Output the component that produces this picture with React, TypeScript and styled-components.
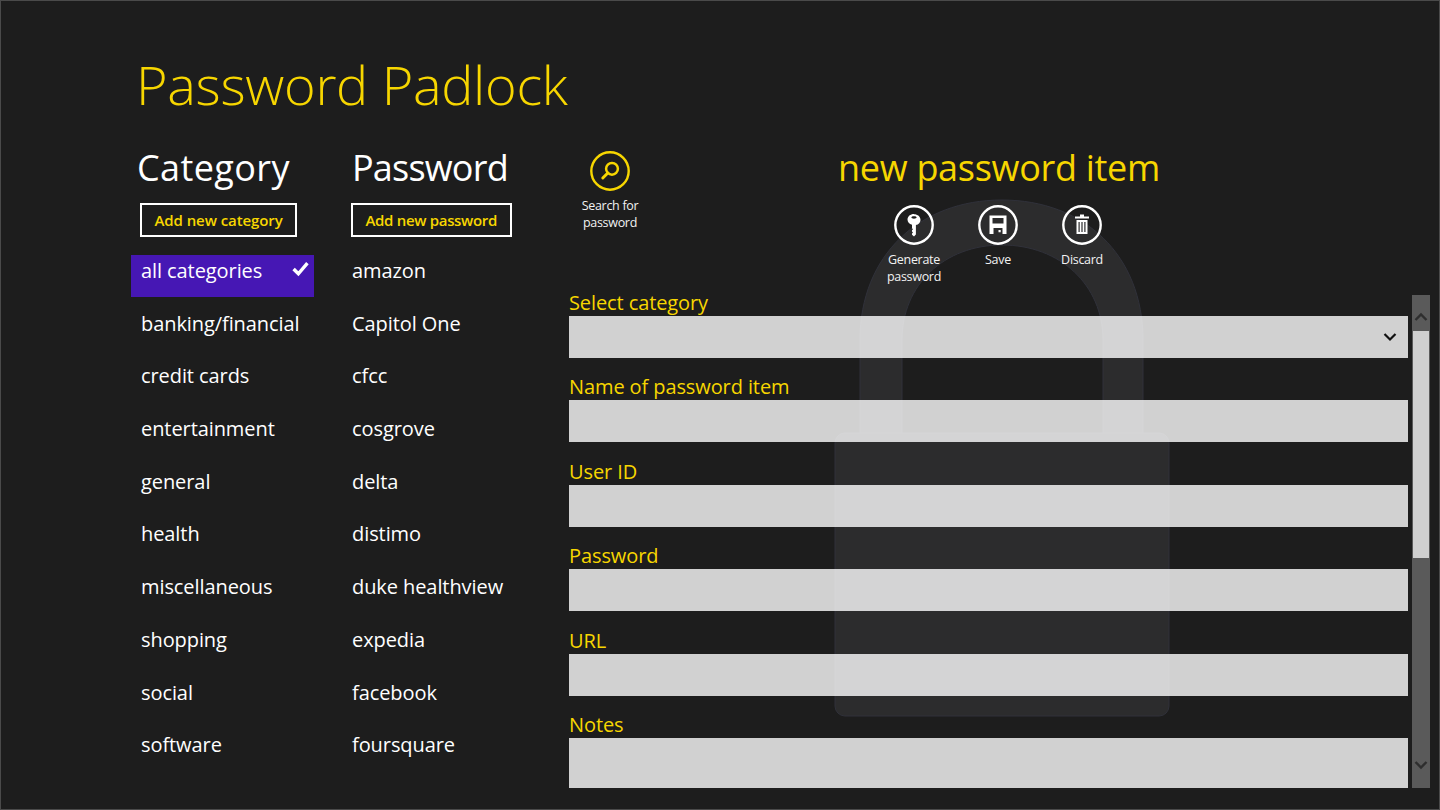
import * as React from 'react';
import styled, { createGlobalStyle } from 'styled-components';

const categories = ['all categories', 'banking/financial', 'credit cards', 'entertainment', 'general', 'health', 'miscellaneous', 'shopping', 'social', 'software'];
const passwords = ['amazon', 'Capitol One', 'cfcc', 'cosgrove', 'delta', 'distimo', 'duke healthview', 'expedia', 'facebook', 'foursquare'];
const fields = ['Select category', 'Name of password item', 'User ID', 'Password', 'URL'];

const yellow = '#f7d600';

const App = (): JSX.Element => <Page>
    <GlobalStyle />
    <Title>Password Padlock</Title>
    <Columns>
        <CategoryColumn>
            <ColumnHeading tracking={0.4}>Category</ColumnHeading>
            <AddButton inset={3} tracking={-0.08}>Add new category</AddButton>
            <List>
                {categories.map((name, index) => <Item key={name} selected={index === 0} inset={4}>
                    {name}
                    {index === 0 && <CheckMark viewBox="0 0 16 16"><path d="M1.5 8.5l4.5 4.5L14.5 3" /></CheckMark>}
                </Item>)}
            </List>
        </CategoryColumn>
        <PasswordColumn>
            <ColumnHeading tracking={-0.8}>Password</ColumnHeading>
            <AddButton inset={-1} tracking={-0.32}>Add new password</AddButton>
            <List>
                {passwords.map(name => <Item key={name} inset={0}>{name}</Item>)}
            </List>
        </PasswordColumn>
        <Detail>
            <Watermark viewBox="-1 -1 336 518">
                <path d="M25 233 L25 140 C25 55 85 0 167 0 C249 0 308 55 308 140 L308 233 L268 233 L268 140 C268 85 225 45 167 45 C109 45 67 85 67 140 L67 233 Z" />
                <rect x="0" y="233" width="334" height="283" rx="10" />
            </Watermark>
            <DetailTop>
                <SearchAction>
                    <RoundIcon viewBox="0 0 40 40" accent>
                        <circle cx="20" cy="20" r="18.7" />
                        <circle cx="22" cy="17.800" r="5.900" strokeWidth="2.500" />
                        <path d="M17.800 22L12.800 27" strokeWidth="3" strokeLinecap="round" />
                    </RoundIcon>
                    <ActionLabel>Search for<br />password</ActionLabel>
                </SearchAction>
                <DetailHead>
                    <DetailHeading>new password item</DetailHeading>
                    <Actions>
                        <Action>
                            <RoundIcon viewBox="0 0 40 40">
                                <circle cx="20" cy="20" r="18.7" />
                                <FillGroup>
                                    <path fillRule="evenodd" d="M20 9.300c3.700 0 6.500 2.400 6.500 5.600 0 2.400-1.900 4.400-4.600 5.200v9.400l-1.900 2-2-1.700v-1.400l1-1-1-1v-1.200l1-1-1-1v-3.500c-2.800-.8-4.500-2.800-4.500-5.200 0-3.200 2.800-5.600 6.500-5.600zm0 2c-1.500 0-2.600.5-2.600 1.200s1.100 1.200 2.600 1.200 2.600-.5 2.600-1.200-1.100-1.200-2.600-1.200z" />
                                </FillGroup>
                            </RoundIcon>
                            <ActionLabel>Generate<br />password</ActionLabel>
                        </Action>
                        <Action>
                            <RoundIcon viewBox="0 0 40 40">
                                <circle cx="20" cy="20" r="18.7" />
                                <FillGroup>
                                    <path fillRule="evenodd" d="M11.500 10.500H28.500V29H11.500zM14.500 13v5.500h11V13zM15.500 23v6h9V23zM20.500 25h2.200v2.200h-2.200z" />
                                </FillGroup>
                            </RoundIcon>
                            <ActionLabel>Save</ActionLabel>
                        </Action>
                        <Action>
                            <RoundIcon viewBox="0 0 40 40">
                                <circle cx="20" cy="20" r="18.7" />
                                <FillGroup>
                                    <path fillRule="evenodd" d="M18 9.500h4v2h5v2H13v-2h5zM14.500 15h11v14h-11zM16.500 17v10h1.200V17zM19.400 17v10h1.200V17zM22.300 17v10h1.200V17z" />
                                </FillGroup>
                            </RoundIcon>
                            <ActionLabel>Discard</ActionLabel>
                        </Action>
                    </Actions>
                </DetailHead>
            </DetailTop>
            <FormRow>
                <Form>
                    {fields.map((label, index) => <Field key={label}>
                        <FieldLabel>{label}</FieldLabel>
                        <FieldBox>
                            {index === 0 && <SelectArrow viewBox="0 0 14 10"><path d="M1.500 2l5.500 5.500L12.500 2" /></SelectArrow>}
                        </FieldBox>
                    </Field>)}
                    <Field>
                        <FieldLabel>Notes</FieldLabel>
                        <FieldBox tall />
                    </Field>
                </Form>
                <ScrollBar>
                    <ScrollButton>
                        <ScrollArrow viewBox="0 0 14 10"><path d="M1.500 8L7 2.500 12.500 8" /></ScrollArrow>
                    </ScrollButton>
                    <ScrollThumb />
                    <ScrollRest>
                        <ScrollArrow viewBox="0 0 14 10"><path d="M1.500 2L7 7.500 12.500 2" /></ScrollArrow>
                    </ScrollRest>
                </ScrollBar>
            </FormRow>
        </Detail>
    </Columns>
</Page>;

export default App;

const GlobalStyle = createGlobalStyle`
    html, body {
        margin: 0;
        padding: 0;
        background: #1d1d1d;
    }
`;

const Page = styled.div`
    box-sizing: border-box;
    width: 1440px;
    height: 810px;
    padding: 48px 0 0 137px;
    overflow: hidden;
    background: #1d1d1d;
    box-shadow: inset 0 0 0 1px #4a4a4a;
    color: #fff;
    font-family: "Open Sans", "Noto Sans", sans-serif;
`;

const Title = styled.h1`
    margin: 0 0 0 -1px;
    font-size: 54px;
    line-height: 72px;
    font-weight: 300;
    letter-spacing: -0.3px;
    color: ${yellow};
`;

const Columns = styled.div`
    display: flex;
    margin-top: 24px;
`;

const CategoryColumn = styled.div`
    width: 215px;
`;

const PasswordColumn = styled.div`
    width: 217px;
`;

const ColumnHeading = styled.h2<{ tracking: number }>`
    margin: 0;
    font-size: 36px;
    line-height: 48px;
    font-weight: 400;
    letter-spacing: ${props => props.tracking}px;
`;

const AddButton = styled.button<{ inset: number; tracking: number }>`
    display: block;
    box-sizing: border-box;
    height: 34px;
    margin: 11px 0 0 ${props => props.inset}px;
    padding: 0 12.5px;
    background: transparent;
    border: 2px solid #fff;
    color: ${yellow};
    font-family: inherit;
    font-size: 15px;
    font-weight: 600;
    letter-spacing: ${props => props.tracking}px;
`;

const List = styled.ul`
    display: flex;
    flex-direction: column;
    gap: 10.7px;
    margin: 18px 0 0;
    padding: 0;
    list-style: none;
`;

const Item = styled.li<{ selected?: boolean; inset: number }>`
    display: flex;
    justify-content: space-between;
    box-sizing: border-box;
    width: 183px;
    height: 42px;
    margin-left: ${props => props.selected ? '-6px' : '0'};
    padding: 1px 5px 0 ${props => props.selected ? props.inset + 6 : props.inset}px;
    background: ${props => props.selected ? '#4617b4' : 'transparent'};
    font-size: 20px;
    line-height: 30px;
    letter-spacing: -0.08px;
    white-space: nowrap;
`;

const CheckMark = styled.svg`
    width: 17px;
    height: 17px;
    margin-top: 4px;
    fill: none;
    stroke: #fff;
    stroke-width: 3.2;
`;

const Detail = styled.div`
    position: relative;
    width: 871px;
`;

const Watermark = styled.svg`
    position: absolute;
    left: 265px;
    top: 55px;
    width: 336px;
    height: 518px;
    fill: #2c2c2d;
    stroke: #30313a;
    stroke-width: 1;
`;

const DetailTop = styled.div`
    position: relative;
    display: flex;
    height: 151px;
`;

const SearchAction = styled.div`
    display: flex;
    flex-direction: column;
    align-items: center;
    width: 82px;
    padding-top: 7px;
`;

const DetailHead = styled.div`
    display: flex;
    flex-direction: column;
    align-items: center;
    width: 696px;
`;

const DetailHeading = styled.h2`
    margin: 0;
    font-size: 36px;
    line-height: 48px;
    font-weight: 400;
    letter-spacing: -0.3px;
    color: ${yellow};
`;

const Actions = styled.div`
    display: flex;
    margin-top: 13px;
    margin-left: -2px;
`;

const Action = styled.div`
    display: flex;
    flex-direction: column;
    align-items: center;
    width: 84px;
`;

const RoundIcon = styled.svg<{ accent?: boolean }>`
    width: 40px;
    height: 40px;
    fill: none;
    stroke: ${props => props.accent ? yellow : '#fff'};
    stroke-width: 2.4;
    color: ${props => props.accent ? yellow : '#fff'};
`;

const FillGroup = styled.g`
    fill: currentColor;
    stroke: none;
`;

const ActionLabel = styled.div`
    margin-top: 6px;
    font-size: 12.5px;
    line-height: 17px;
    letter-spacing: -0.3px;
    text-align: center;
    color: #f2f2f2;
`;

const FormRow = styled.div`
    position: relative;
    display: flex;
    gap: 4px;
`;

const Form = styled.div`
    width: 839px;
    height: 493px;
`;

const Field = styled.div`
    height: 84.4px;
`;

const FieldLabel = styled.div`
    height: 21px;
    font-size: 20px;
    line-height: 16px;
    letter-spacing: -0.1px;
    color: ${yellow};
    white-space: nowrap;
`;

const FieldBox = styled.div<{ tall?: boolean }>`
    display: flex;
    align-items: center;
    justify-content: flex-end;
    height: ${props => props.tall ? '50px' : '42px'};
    padding-right: 11px;
    background: rgba(255, 255, 255, 0.8);
`;

const SelectArrow = styled.svg`
    width: 14px;
    height: 10px;
    fill: none;
    stroke: #111;
    stroke-width: 2.2;
`;

const ScrollBar = styled.div`
    display: flex;
    flex-direction: column;
    width: 18px;
    height: 493px;
    background: #5a5a5a;
`;

const ScrollButton = styled.div`
    display: flex;
    justify-content: center;
    height: 36px;
    padding-top: 17px;
    box-sizing: border-box;
`;

const ScrollThumb = styled.div`
    height: 227px;
    margin: 0 1px;
    background: #d0d0d0;
`;

const ScrollRest = styled.div`
    flex: 1;
    display: flex;
    align-items: flex-end;
    justify-content: center;
    padding-bottom: 18px;
`;

const ScrollArrow = styled.svg`
    width: 14px;
    height: 10px;
    fill: none;
    stroke: #2e2e2e;
    stroke-width: 2.4;
`;
